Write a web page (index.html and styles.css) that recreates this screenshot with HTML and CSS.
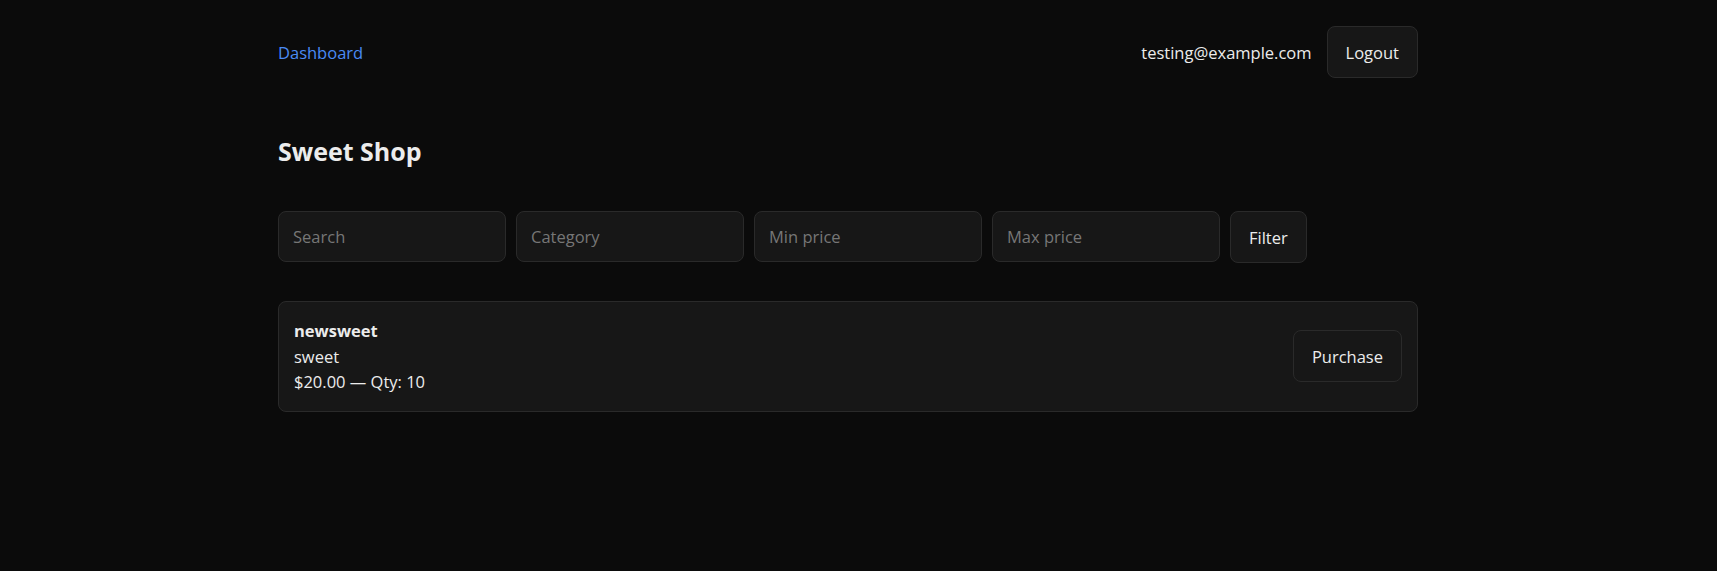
FILE: index.html
```html
<!DOCTYPE html>
<html lang="en">
<head>
<meta charset="utf-8">
<title>Sweet Shop</title>
<link rel="stylesheet" href="styles.css">
</head>
<body>
<div class="container">
  <nav class="nav">
    <a class="nav-link" href="#">Dashboard</a>
    <div class="nav-right">
      <span class="user-email">testing@example.com</span>
      <button class="btn">Logout</button>
    </div>
  </nav>
  <main>
    <h1 class="title">Sweet Shop</h1>
    <form class="filters">
      <input class="field" type="text" placeholder="Search">
      <input class="field" type="text" placeholder="Category">
      <input class="field" type="text" placeholder="Min price">
      <input class="field" type="text" placeholder="Max price">
      <button class="btn" type="button">Filter</button>
    </form>
    <ul class="list">
      <li class="card">
        <div class="card-info">
          <div class="card-name">newsweet</div>
          <div>sweet</div>
          <div>$20.00 — Qty: 10</div>
        </div>
        <button class="btn">Purchase</button>
      </li>
    </ul>
  </main>
</div>
</body>
</html>
```

FILE: styles.css
```css
* { box-sizing: border-box; }
html, body {
  margin: 0;
  background: #0b0b0b;
  color: #ececec;
  font-family: "Open Sans", "Noto Sans", sans-serif;
  font-size: 16.5px;
}
.container {
  width: 1140px;
  margin-left: 278px;
  padding-top: 26px;
}
.nav {
  display: flex;
  align-items: center;
  justify-content: space-between;
  height: 52px;
}
.nav-link {
  color: #4a8af4;
  text-decoration: none;
}
.nav-right {
  display: flex;
  align-items: center;
  gap: 15px;
}
.btn {
  font-family: inherit;
  font-size: 16.5px;
  color: #ececec;
  background: #171717;
  border: 1px solid #2a2a2a;
  border-radius: 8px;
  height: 52px;
  padding: 0 18px;
  cursor: pointer;
}
.title {
  font-size: 25px;
  font-weight: 700;
  line-height: 34px;
  margin: 56px 0 43px;
}
.filters {
  display: flex;
  gap: 10px;
  margin: 0;
}
.field {
  width: 228px;
  height: 51px;
  font-family: inherit;
  font-size: 16.5px;
  color: #ececec;
  background: #171717;
  border: 1px solid #2a2a2a;
  border-radius: 8px;
  padding: 0 14px;
}
.field::placeholder { color: #767676; }
.list {
  list-style: none;
  margin: 38px 0 0;
  padding: 0;
}
.card {
  display: flex;
  align-items: center;
  justify-content: space-between;
  background: #171717;
  border: 1px solid #2a2a2a;
  border-radius: 8px;
  padding: 16px 15px;
  line-height: 25.5px;
}
.card-name { font-weight: 700; }
```
